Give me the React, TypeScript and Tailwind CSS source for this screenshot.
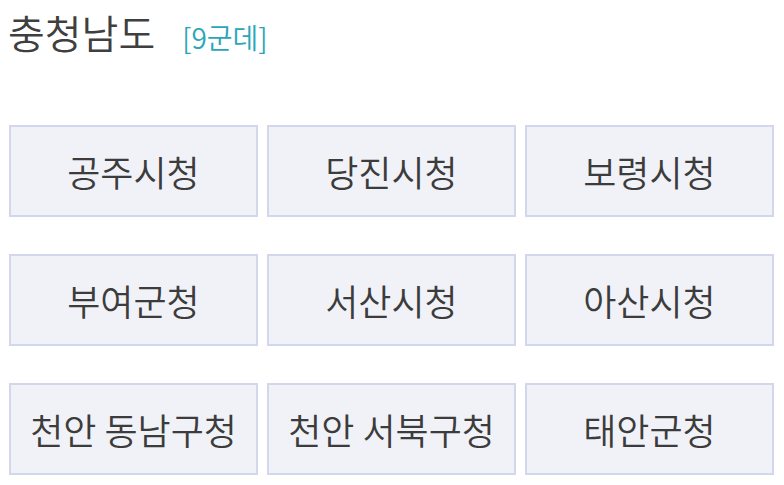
import React from "react";

const items = [
  "공주시청",
  "당진시청",
  "보령시청",
  "부여군청",
  "서산시청",
  "아산시청",
  "천안 동남구청",
  "천안 서북구청",
  "태안군청",
];

export default function App() {
  return (
    <div
      className="w-[784px] h-[485px] bg-white overflow-hidden pl-[9px] pr-[10px] font-[350]"
      style={{ fontFamily: '"Noto Sans CJK KR", "Noto Sans", sans-serif' }}
    >
      <div className="flex items-baseline pt-[8px] h-[125px]">
        <span className="-ml-[1px] text-[40px] leading-[48px] text-[#3f3f3f]">충청남도</span>
        <span className="ml-[27px] text-[28px] leading-[48px] text-[#2ba6b9]">[9군데]</span>
      </div>
      <div className="grid grid-cols-3 gap-x-[9px] gap-y-[37px]">
        {items.map((t) => (
          <div
            key={t}
            className="h-[92px] flex items-center justify-center border-2 border-[#d3d7eb] bg-[#f1f2f8] text-[36px] text-[#3c3c3c] leading-none"
          >
            {t}
          </div>
        ))}
      </div>
    </div>
  );
}
